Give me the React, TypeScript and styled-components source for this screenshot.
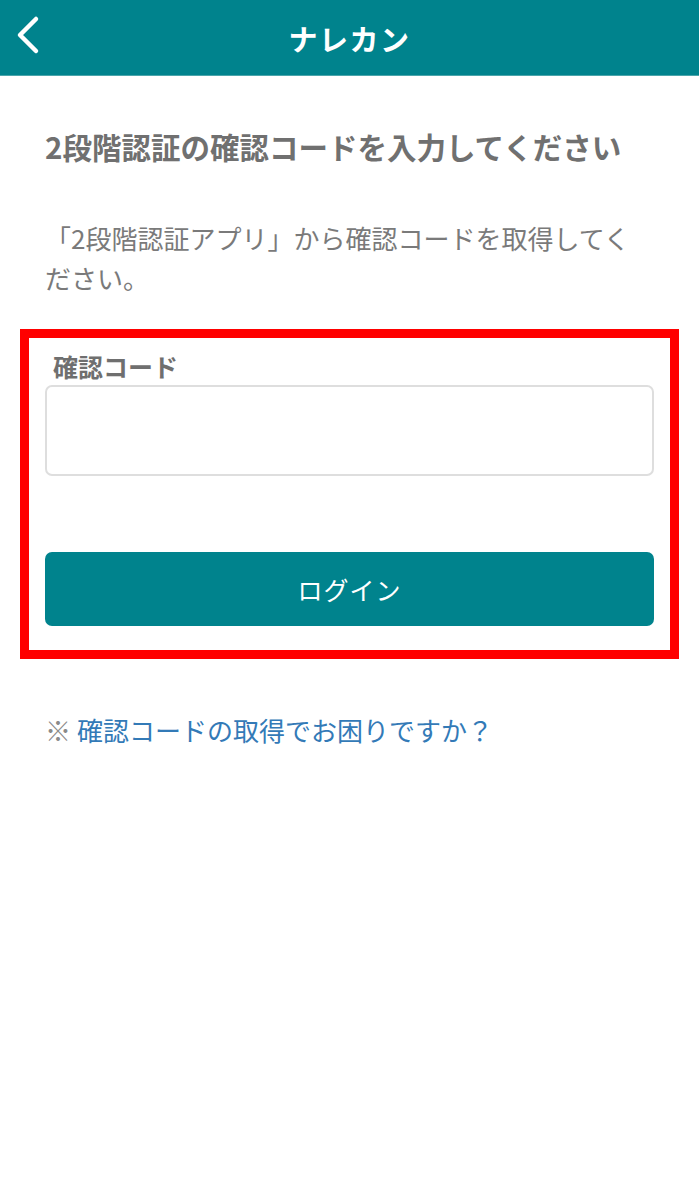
import React from "react";
import styled, { createGlobalStyle } from "styled-components";

const Global = createGlobalStyle`
  html, body { margin: 0; padding: 0; background: #fff; }
  body { font-family: "Noto Sans CJK JP", "Noto Sans", sans-serif; }
  * { box-sizing: border-box; }
`;

const Page = styled.div`
  width: 699px;
  min-height: 1200px;
  background: #fff;
`;

const Header = styled.header`
  height: 76px;
  background: #00838d;
  border-bottom: 1px solid #4aa5ab;
  display: flex;
  align-items: center;
  justify-content: center;
  position: relative;
`;

const BackButton = styled.button`
  position: absolute;
  left: 10px;
  top: 14px;
  width: 36px;
  height: 42px;
  background: none;
  border: none;
  padding: 0;
  display: flex;
  align-items: center;
  justify-content: center;
`;

const HeaderTitle = styled.div`
  color: #fff;
  font-size: 29px;
  font-weight: 700;
  letter-spacing: 1.5px;
`;

const Content = styled.main`
  padding: 50px 45px 0;
  display: flex;
  flex-direction: column;
`;

const Title = styled.div`
  color: #707070;
  font-size: 29.5px;
  font-weight: 700;
  line-height: 40px;
  white-space: nowrap;
`;

const Lead = styled.p`
  margin: 52px 0 0;
  color: #7a7a7a;
  font-size: 26px;
  font-weight: 400;
  line-height: 40px;
`;

const Highlight = styled.section`
  margin: 31px -25px 0;
  border: 9px solid #ff0000;
  padding: 12px 16px 24px;
  display: flex;
  flex-direction: column;
`;

const Label = styled.label`
  color: #6f6f6f;
  font-size: 25px;
  font-weight: 700;
  padding-left: 8px;
  line-height: 32px;
`;

const Input = styled.input`
  margin-top: 3px;
  height: 91px;
  border: 2px solid #dedede;
  border-radius: 7px;
  background: #fff;
  font-size: 24px;
  padding: 0 16px;
  outline: none;
`;

const SubmitButton = styled.button`
  margin-top: 76px;
  height: 74px;
  border: none;
  border-radius: 7px;
  background: #00838d;
  color: #fff;
  font-family: inherit;
  font-size: 25px;
  font-weight: 400;
  letter-spacing: 1px;
`;

const HelpLine = styled.p`
  margin: 51px 0 0;
  font-size: 26px;
  line-height: 40px;
  color: #8a8a8a;
`;

const HelpLink = styled.a`
  color: #337ab7;
  text-decoration: none;
  margin-left: 6px;
`;

export default function App() {
  return (
    <Page>
      <Global />
      <Header>
        <BackButton aria-label="戻る">
          <svg width="28" height="40" viewBox="0 0 28 40">
            <path
              d="M22 4 L6 20 L22 36"
              fill="none"
              stroke="#fff"
              strokeWidth="4.5"
              strokeLinecap="round"
              strokeLinejoin="round"
            />
          </svg>
        </BackButton>
        <HeaderTitle>ナレカン</HeaderTitle>
      </Header>
      <Content>
        <Title>2段階認証の確認コードを入力してください</Title>
        <Lead>「2段階認証アプリ」から確認コードを取得してください。</Lead>
        <Highlight>
          <Label htmlFor="code">確認コード</Label>
          <Input id="code" type="text" />
          <SubmitButton type="button">ログイン</SubmitButton>
        </Highlight>
        <HelpLine>
          ※<HelpLink href="#">確認コードの取得でお困りですか？</HelpLink>
        </HelpLine>
      </Content>
    </Page>
  );
}
